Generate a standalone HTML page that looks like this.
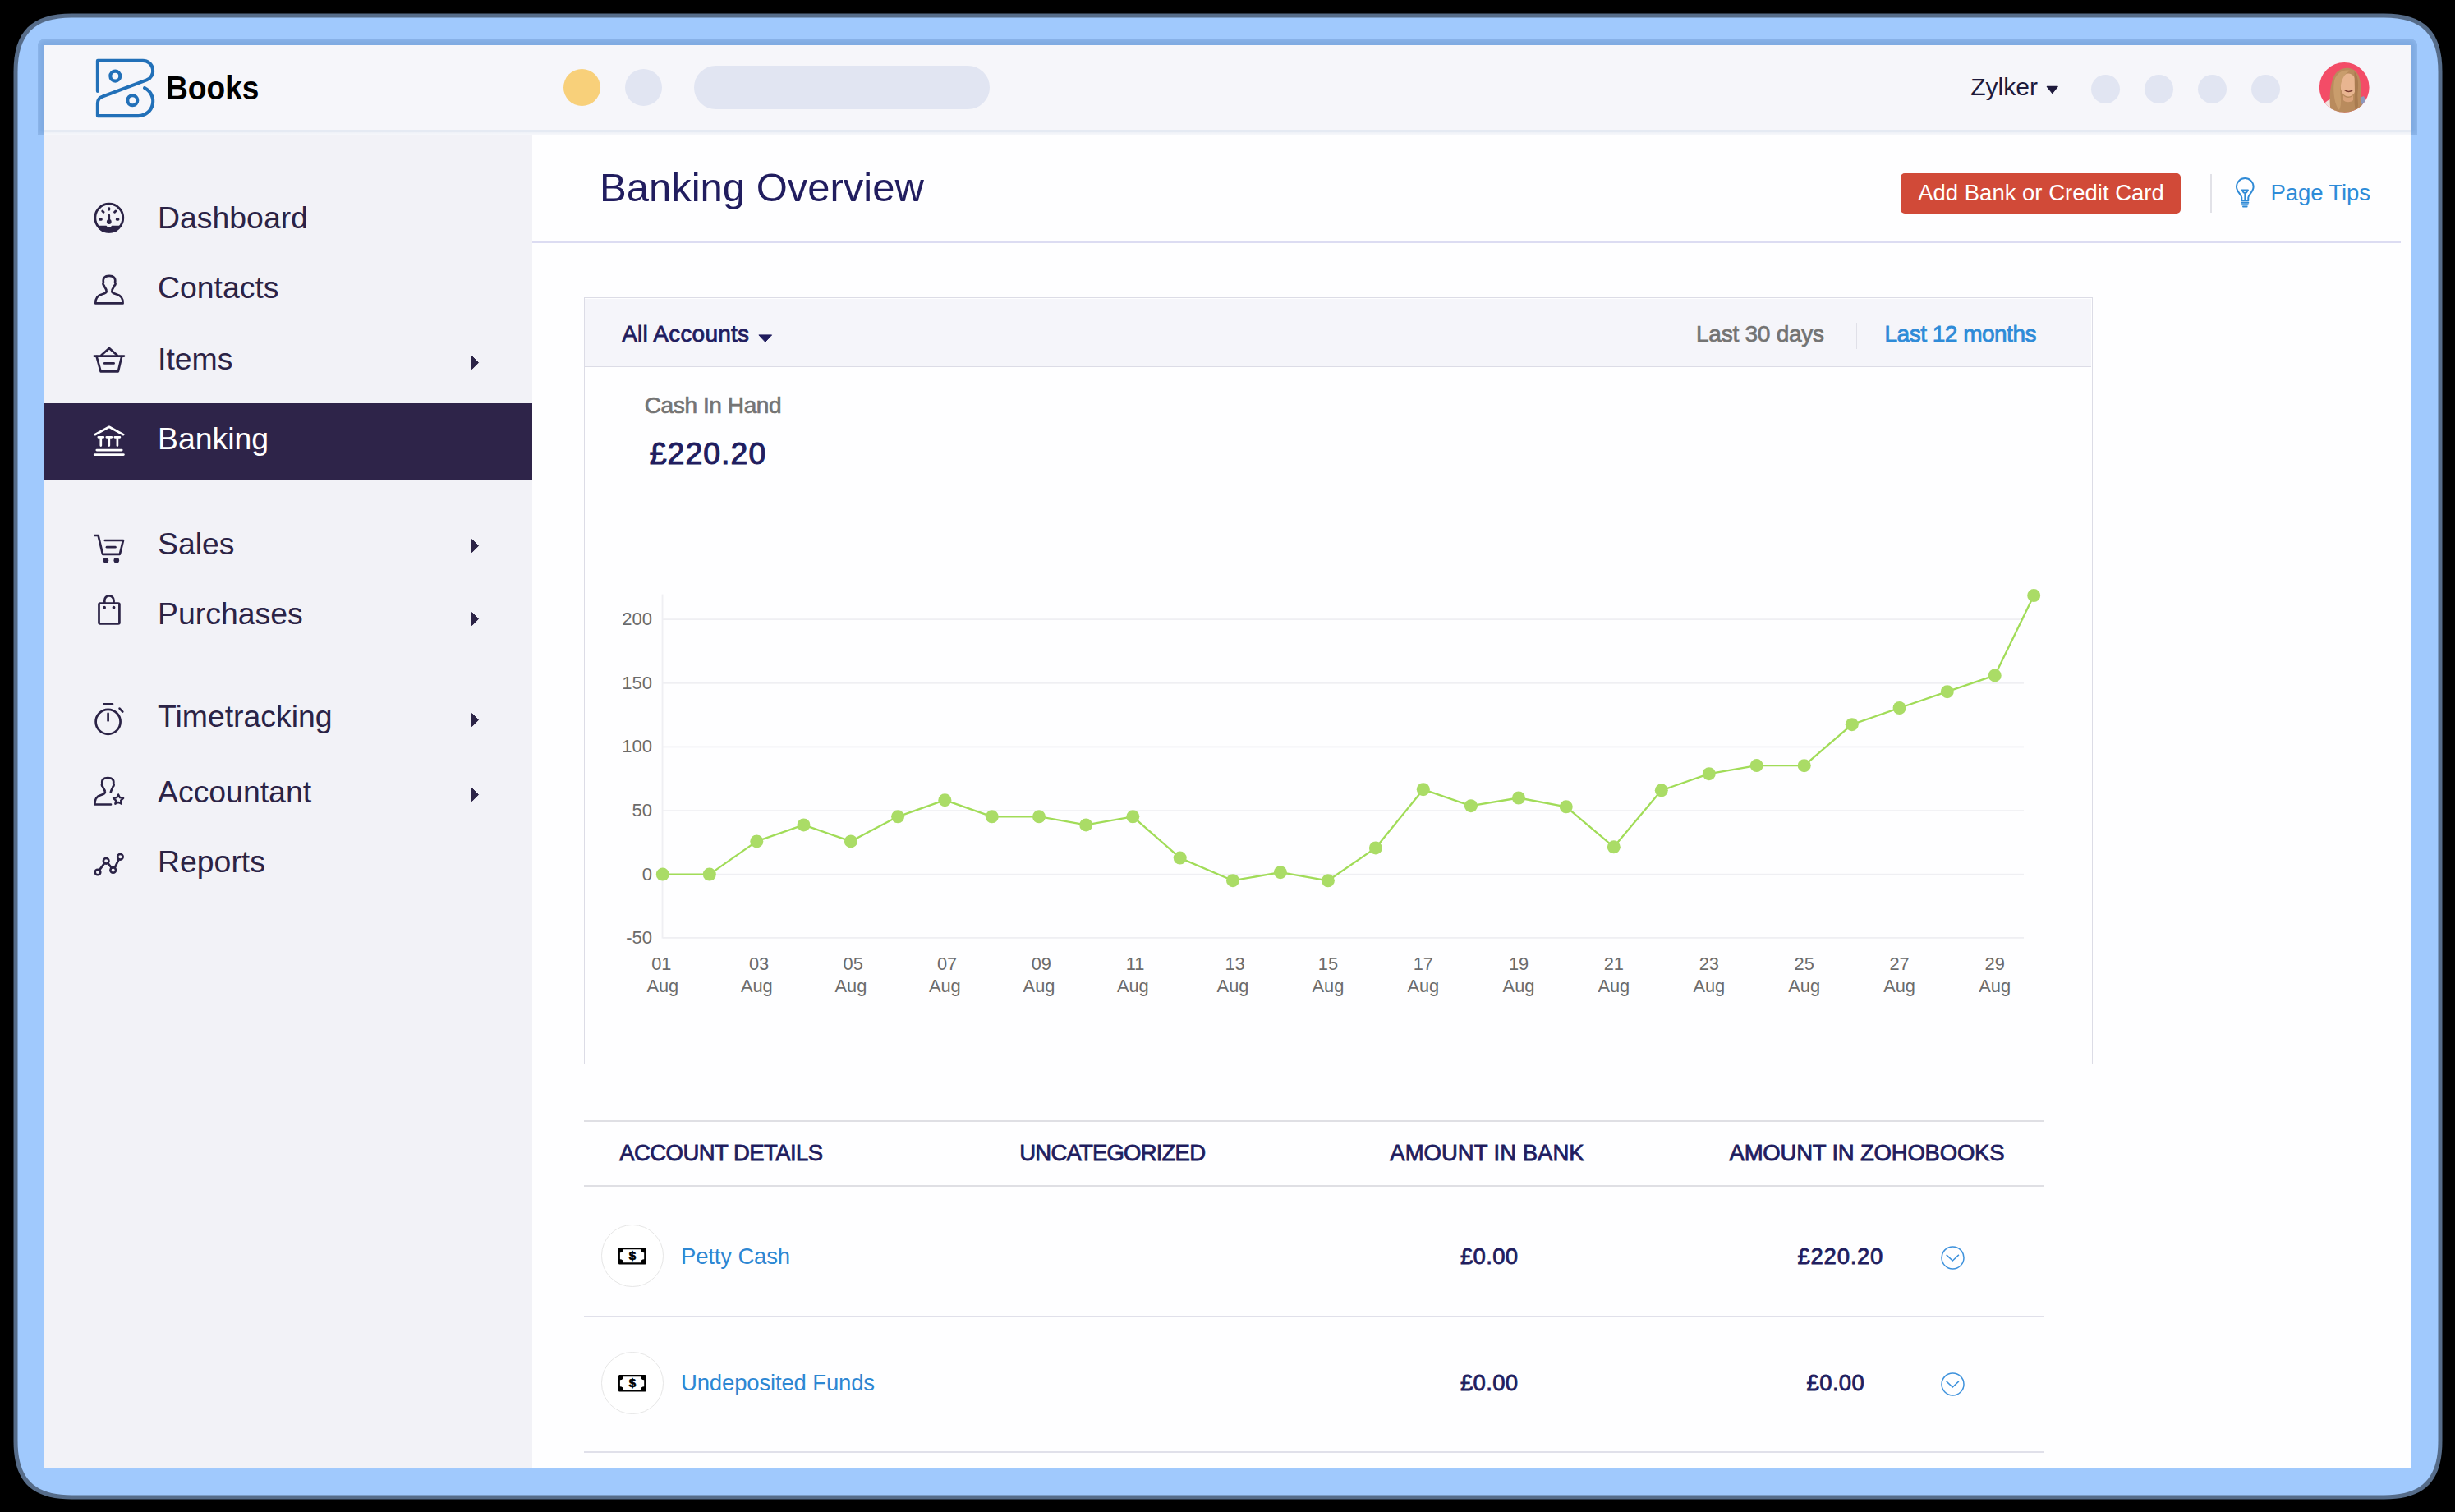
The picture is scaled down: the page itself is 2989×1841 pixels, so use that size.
<!DOCTYPE html><html><head><meta charset="utf-8"><style>
html,body{margin:0;padding:0;width:2989px;height:1841px;overflow:hidden;background:#000;}
*{box-sizing:border-box;}
body{font-family:"Liberation Sans",sans-serif;position:relative;}
.a{position:absolute;}
.t{position:absolute;white-space:nowrap;line-height:1;}
#frameo{position:absolute;left:16.5px;top:17px;width:2957px;height:1808.5px;border-radius:72px;background:#566c89;}
#frame{position:absolute;left:21.5px;top:22px;width:2946.5px;height:1798.5px;border-radius:67px;background:#a0c9fd;}
#hdrshadow{position:absolute;left:46px;top:47px;width:2897px;height:117px;border-radius:9px 9px 0 0;
  background:#80abe2;box-shadow:inset 0 0 4px 2px #8db6ea;}
#content{position:absolute;left:54px;top:55px;width:2881px;height:1732px;background:#fefeff;overflow:hidden;}
#header{position:absolute;left:0;top:0;width:2881px;height:103px;background:#f6f6fa;}
#hline{position:absolute;left:0;top:103px;width:2881px;height:3px;background:#e4e9f2;}
#hline2{position:absolute;left:0;top:106px;width:2881px;height:4px;background:linear-gradient(#eef1f6,rgba(255,255,255,0));}
#sidebar{position:absolute;left:0;top:106px;width:594px;height:1626px;background:#f2f2f7;}
</style></head><body><svg class="a" style="left:0;top:0" width="2989" height="1841"><path d="M87.5,16.5 H2902.5 C2951.8,16.5 2973.5,38.2 2973.5,87.5 V1754.5 C2973.5,1803.8 2951.8,1825.5 2902.5,1825.5 H87.5 C38.2,1825.5 16.5,1803.8 16.5,1754.5 V87.5 C16.5,38.2 38.2,16.5 87.5,16.5 Z" fill="#566c89"/><path d="M87.5,21.5 H2902.5 C2948.3,21.5 2968.5,41.7 2968.5,87.5 V1754.5 C2968.5,1800.3 2948.3,1820.5 2902.5,1820.5 H87.5 C41.7,1820.5 21.5,1800.3 21.5,1754.5 V87.5 C21.5,41.7 41.7,21.5 87.5,21.5 Z" fill="#a0c9fd"/></svg>
<div id="hdrshadow"></div><div id="content"></div>
<div class="a" style="left:54px;top:55px;width:2881px;height:103px;background:#f6f6fa"></div>
<div class="a" style="left:54px;top:164px;width:594px;height:1623px;background:#f2f2f7"></div>
<div class="a" style="left:54px;top:158px;width:2881px;height:3px;background:#e5eaf3"></div>
<div class="a" style="left:54px;top:161px;width:2881px;height:3px;background:linear-gradient(#eef1f7,#f6f7fb)"></div>
<div class="a" style="left:685.5px;top:84px;width:45px;height:45px;border-radius:50%;background:#f8d07a"></div>
<div class="a" style="left:760.5px;top:84px;width:45px;height:45px;border-radius:50%;background:#e1e5f2"></div>
<div class="a" style="left:845px;top:79.5px;width:360px;height:53px;border-radius:26.5px;background:#e1e5f2"></div>
<div class="a" style="left:2546.3px;top:90.5px;width:35px;height:35px;border-radius:50%;background:#e1e5f2"></div>
<div class="a" style="left:2611.1px;top:90.5px;width:35px;height:35px;border-radius:50%;background:#e1e5f2"></div>
<div class="a" style="left:2676.2px;top:90.5px;width:35px;height:35px;border-radius:50%;background:#e1e5f2"></div>
<div class="a" style="left:2741.3px;top:90.5px;width:35px;height:35px;border-radius:50%;background:#e1e5f2"></div>
<div class="t" style="left:2399.3px;top:90.9px;font-size:30px;color:#1e1a3c;">Zylker</div>
<svg class="a" style="left:2490px;top:103px" width="18" height="12"><path d="M2.3,2.4 H15.2 L8.75,10.5 Z" fill="#1e1a3c" stroke="#1e1a3c" stroke-width="1.2" stroke-linejoin="round"/></svg>
<svg class="a" style="left:2823px;top:76px" width="62" height="62" viewBox="0 0 62 62">
<defs><clipPath id="avc"><circle cx="31.2" cy="30.4" r="30.4"/></clipPath></defs>
<g clip-path="url(#avc)">
<rect width="62" height="62" fill="#f34c67"/>
<path d="M5,52 C10,45 18,42 25,44 L31,62 L8,62 Z" fill="#f3e2de"/>
<path d="M47,44 L55,41 L59,50 L50,55 Z" fill="#8d98bd"/>
<path d="M15,60 C12,46 14,28 18,18 C22,9 30,6 37,7 C46,8 50,16 51,26 C52,36 50,44 53,52 C54,58 49,62 43,62 L20,62 Z" fill="#b98b5d"/>
<ellipse cx="36.2" cy="27.5" rx="9.8" ry="14" fill="#e8b590"/>
<path d="M19,22 C22,12 31,8 38,10 C31,14 27,22 26.5,32 C26,42 29,50 25,58 C19,52 17,34 19,22 Z" fill="#c99d6c"/>
<path d="M43.5,11 C49,17 48.5,29 47.5,37 C46.5,45 50,52 46,60 C42.5,53 44,45 44,37 Z" fill="#a87b50"/>
<path d="M31.5,33.5 Q36.5,37.5 41.5,33.5" stroke="#7a3d33" stroke-width="1.4" fill="none"/>
<path d="M30,40 C33,44 39,44 42,40 L42,46 C39,49 33,49 30,46 Z" fill="#d9a27a"/>
</g></svg>
<svg class="a" style="left:100px;top:60px" width="240" height="100" viewBox="100 60 240 100">
<g fill="none" stroke="#2270b8" stroke-width="4.1" stroke-linecap="round" stroke-linejoin="round">
<path d="M118.9,110.9 V73.9 H174 A12.2,12.2 0 0 1 178.6,97.4 L124.6,117.6 A8.5,8.5 0 0 0 118.9,125.6 V141.1 H168.4 A17.8,17.8 0 0 0 176,107.2"/>
<circle cx="140.3" cy="92.6" r="6.0" stroke-width="4.1"/>
<circle cx="161.3" cy="122.3" r="6.0" stroke-width="4.1"/>
</g></svg>
<div class="t" style="left:201.5px;top:87.2px;font-size:41px;color:#000;font-weight:700;transform:scaleX(0.905);transform-origin:0 0;">Books</div>
<div class="t" style="left:192.0px;top:246.8px;font-size:37.4px;color:#2b2346;">Dashboard</div>
<div class="t" style="left:192.0px;top:332.0px;font-size:37.4px;color:#2b2346;">Contacts</div>
<div class="t" style="left:192.0px;top:419.0px;font-size:37.4px;color:#2b2346;">Items</div>
<div class="t" style="left:192.0px;top:643.8px;font-size:37.4px;color:#2b2346;">Sales</div>
<div class="t" style="left:192.0px;top:728.8px;font-size:37.4px;color:#2b2346;">Purchases</div>
<div class="t" style="left:192.0px;top:854.2px;font-size:37.4px;color:#2b2346;">Timetracking</div>
<div class="t" style="left:192.0px;top:946.2px;font-size:37.4px;color:#2b2346;">Accountant</div>
<div class="t" style="left:192.0px;top:1031.1px;font-size:37.4px;color:#2b2346;">Reports</div>
<div class="a" style="left:54px;top:491px;width:594px;height:93px;background:#2e2449"></div>
<div class="t" style="left:192.0px;top:516.2px;font-size:37.4px;color:#ffffff;">Banking</div>
<svg class="a" style="left:570px;top:431.3px" width="16" height="20"><path d="M4.5,2.6 L12.5,10.6 L4.5,18.6 Z" fill="#2b2346" stroke="#2b2346" stroke-width="1" stroke-linejoin="round"/></svg>
<svg class="a" style="left:570px;top:654.4px" width="16" height="20"><path d="M4.5,2.6 L12.5,10.6 L4.5,18.6 Z" fill="#2b2346" stroke="#2b2346" stroke-width="1" stroke-linejoin="round"/></svg>
<svg class="a" style="left:570px;top:742.7px" width="16" height="20"><path d="M4.5,2.6 L12.5,10.6 L4.5,18.6 Z" fill="#2b2346" stroke="#2b2346" stroke-width="1" stroke-linejoin="round"/></svg>
<svg class="a" style="left:570px;top:865.6px" width="16" height="20"><path d="M4.5,2.6 L12.5,10.6 L4.5,18.6 Z" fill="#2b2346" stroke="#2b2346" stroke-width="1" stroke-linejoin="round"/></svg>
<svg class="a" style="left:570px;top:957.0px" width="16" height="20"><path d="M4.5,2.6 L12.5,10.6 L4.5,18.6 Z" fill="#2b2346" stroke="#2b2346" stroke-width="1" stroke-linejoin="round"/></svg>
<svg class="a" style="left:100px;top:230px" width="70" height="860" viewBox="100 230 70 860">
<g fill="none" stroke="#2b2346" stroke-width="2.8" stroke-linecap="round" stroke-linejoin="round">
<!-- dashboard -->
<circle cx="132.8" cy="265.2" r="17"/>
<path d="M132.8,253.6 v1.6 M124.8,257 l1.2,1.2 M140.8,257 l-1.2,1.2 M121.6,267.2 h1.8 M142.2,267.2 h1.8" stroke-width="2.9"/>
<path d="M132.8,262 v7" stroke-width="2.6"/>
</g>
<circle cx="132.8" cy="270" r="2.9" fill="#2b2346"/>
<path d="M117.5,274.7 H129.5 A3.6,3.6 0 0 0 136.1,274.7 H148.1 A17.4,17.4 0 0 1 117.5,274.7 Z" fill="#2b2346"/>
<g fill="none" stroke="#2b2346" stroke-width="2.7" stroke-linecap="round" stroke-linejoin="round">
<!-- contacts -->
<path d="M116.3,369.4 H149.6 C149.8,362.5 147,359.5 141.5,358.3 C137.5,357.4 136,355.8 136.4,353.8 C136.8,351.5 139,349.5 139.4,347.6 C140.8,347 140.8,345 140.1,344 C141,338.5 138.5,335.8 133,335.8 C127.5,335.8 125,338.5 125.9,344 C125.2,345 125.2,347 126.6,347.6 C127,349.5 129.2,351.5 129.6,353.8 C130,355.8 128.5,357.4 124.5,358.3 C119,359.5 116.2,362.5 116.3,369.4 Z"/>
<!-- items basket -->
<path d="M123.4,432.5 L133,424 L142.6,432.5"/>
<path d="M114.8,433.6 H151"/>
<path d="M117.6,434 L122.6,452.3 H143.9 L148.2,434"/>
<path d="M127.2,442.4 H138.6"/>
<!-- sales cart -->
<path d="M115.3,652 H119.6 L125,674.8 H145.9 L150,658 H127.8"/>
<path d="M130,666.2 H140.4"/>
<!-- purchases bag -->
<rect x="120.5" y="734.6" width="24.9" height="24.9" rx="1.4"/>
<path d="M127.3,734.2 V731 A5.6,5.6 0 0 1 138.5,731 V734.2"/>
<!-- stopwatch -->
<circle cx="131.6" cy="878.8" r="15"/>
<path d="M126.3,857.3 H137 M145.6,862.6 L149.3,866.6"/>
<path d="M131.6,868.8 V877.4"/>
<!-- accountant -->
<path d="M135,979.5 H115.4 C115.3,972.5 117.8,969.2 123,968 C126.8,967.1 128.2,965.5 127.8,963.5 C127.4,961.2 125.3,959.4 125,957.6 C123.7,957 123.7,955 124.4,954 C123.6,949.2 126,947 131.3,947 C136.6,947 139,949.2 138.2,954 C138.9,955 138.9,957 137.6,957.6 C137.3,959.4 135.5,961.5 134.8,964.5"/>
<path d="M144.1,967.4 L146,971.2 L150.2,971.8 L147.1,974.7 L147.9,978.8 L144.1,976.8 L140.3,978.8 L141.1,974.7 L138,971.8 L142.2,971.2 Z" stroke-width="2.3"/>
<!-- reports -->
<path d="M121,1059.4 L127.2,1051 M131.4,1051 L135.8,1056.6 M139.6,1056.8 L144.6,1046.4"/>
<circle cx="119" cy="1062" r="3.3" stroke-width="2.6"/>
<circle cx="129.2" cy="1048.3" r="3.3" stroke-width="2.6"/>
<circle cx="137.7" cy="1059.4" r="3.3" stroke-width="2.6"/>
<circle cx="146.4" cy="1043.3" r="3.3" stroke-width="2.6"/>
</g>
<circle cx="128.9" cy="682.3" r="3.3" fill="#2b2346"/>
<circle cx="141.8" cy="682.3" r="3.3" fill="#2b2346"/>
<circle cx="127.1" cy="739.7" r="1.9" fill="#2b2346"/>
<circle cx="138.5" cy="739.7" r="1.9" fill="#2b2346"/>
<!-- bank (white) -->
<g fill="none" stroke="#fff" stroke-width="2.7" stroke-linecap="round" stroke-linejoin="round">
<path d="M115.6,529.2 L132.9,519.8 L150.2,529.2"/>
<path d="M122.8,533 V542.6 M132.8,533 V542.6 M142.9,533 V542.6"/>
<path d="M119.8,532.3 H125.8 M129.8,532.3 H135.8 M139.9,532.3 H145.9"/>
<path d="M117.8,548.1 H148.2"/>
<path d="M115.3,553.6 H150.4"/>
</g>
</svg>
<div class="t" style="left:730.0px;top:203.5px;font-size:49px;color:#211d5f;">Banking Overview</div>
<div class="a" style="left:648px;top:294px;width:2275px;height:2.2px;background:#dcdcf2"></div>
<div class="a" style="left:2314.4px;top:210.5px;width:341px;height:49.5px;border-radius:5px;background:#d14a38"></div>
<div class="t" style="left:2335.2px;top:221.2px;font-size:27.5px;color:#fff;">Add Bank or Credit Card</div>
<div class="a" style="left:2691.3px;top:212.3px;width:1.4px;height:46.5px;background:#e2e2e8"></div>
<svg class="a" style="left:2715px;top:213px" width="36" height="44" viewBox="2715 213 36 44">
<g fill="none" stroke="#2f8ad6" stroke-width="2" stroke-linecap="round" stroke-linejoin="round">
<path d="M2729.3,244.3 V240.4 C2729.3,237.6 2723,233.2 2723,227.4 A10.3,10.3 0 0 1 2743.6,227.4 C2743.6,233.2 2737.3,237.6 2737.3,240.4 V244.3 Z"/>
<path d="M2729.6,231.4 H2737 L2735,234.6 H2731.6 Z M2733.3,234.6 V243.5" stroke-width="1.9"/>
<path d="M2729.3,246.8 H2737.3 M2729.8,249.3 H2736.8"/>
<path d="M2731,251.6 H2735.6"/>
</g></svg>
<div class="t" style="left:2764.5px;top:221.2px;font-size:27.5px;color:#2e8bd8;letter-spacing:-0.1px;">Page Tips</div>
<div class="a" style="left:710.5px;top:362px;width:1837px;height:934px;border:1.6px solid #dcdce6;background:#fefeff"></div>
<div class="a" style="left:712px;top:363.5px;width:1834px;height:82.5px;background:#f5f5fa"></div>
<div class="a" style="left:712px;top:445.6px;width:1834px;height:1.6px;background:#dcdce6"></div>
<div class="a" style="left:712px;top:617.6px;width:1834px;height:1.6px;background:#dcdce6"></div>
<div class="t" style="left:757.2px;top:392.7px;font-size:28px;color:#211d5f;letter-spacing:0.2px;-webkit-text-stroke:0.8px #211d5f;">All Accounts</div>
<svg class="a" style="left:920px;top:404px" width="24" height="16"><path d="M3.9,3.9 H19.6 L11.75,12.3 Z" fill="#211d5f" stroke="#211d5f" stroke-width="1" stroke-linejoin="round"/></svg>
<div class="t" style="left:2065.0px;top:392.7px;font-size:28px;color:#737373;letter-spacing:-0.25px;-webkit-text-stroke:0.7px #737373;">Last 30 days</div>
<div class="a" style="left:2259.6px;top:392.6px;width:1.4px;height:32.4px;background:#e0e0e8"></div>
<div class="t" style="left:2294.5px;top:392.7px;font-size:28px;color:#2e8bd8;letter-spacing:-0.5px;-webkit-text-stroke:0.8px #2e8bd8;">Last 12 months</div>
<div class="t" style="left:784.8px;top:479.7px;font-size:28px;color:#747474;letter-spacing:-0.4px;-webkit-text-stroke:0.7px #747474;">Cash In Hand</div>
<div class="t" style="left:790.7px;top:534.1px;font-size:37.5px;color:#211d5f;letter-spacing:1.0px;-webkit-text-stroke:1.1px #211d5f;">£220.20</div>
<svg class="a" style="left:711px;top:620px" width="1835" height="674" viewBox="711 620 1835 674"><rect x="807" y="753.2" width="1657" height="1.8" fill="#efeff3"/><rect x="807" y="830.9" width="1657" height="1.8" fill="#efeff3"/><rect x="807" y="908.5" width="1657" height="1.8" fill="#efeff3"/><rect x="807" y="986.2" width="1657" height="1.8" fill="#efeff3"/><rect x="807" y="1063.8" width="1657" height="1.8" fill="#efeff3"/><rect x="807" y="1141.0" width="1657" height="1.8" fill="#efeff3"/><rect x="805.6" y="723.6" width="1.9" height="419" fill="#efeff3"/><path d="M806.8,1064.6 L863.8,1064.6 L921.3,1024.4 L978.5,1004.4 L1035.9,1024.4 L1093.1,994.3 L1150.35,974.2 L1207.8,994.3 L1265,994.3 L1322.2,1004.4 L1379.3,994.3 L1436.7,1044.6 L1501,1072.2 L1558.9,1062.2 L1616.9,1072.3 L1674.9,1032.4 L1732.8,961.2 L1790.9,981.2 L1849,971.5 L1906.8,982.3 L1964.8,1031.3 L2022.8,962.3 L2080.8,942.2 L2138.7,932.1 L2196.7,932.2 L2254.8,882.2 L2312.6,862 L2370.8,842.2 L2428.7,822.4 L2476.2,725.1" fill="none" stroke="#a1dc58" stroke-width="2.3" stroke-linejoin="round"/><circle cx="806.8" cy="1064.6" r="8" fill="#aadc66"/><circle cx="863.8" cy="1064.6" r="8" fill="#aadc66"/><circle cx="921.3" cy="1024.4" r="8" fill="#aadc66"/><circle cx="978.5" cy="1004.4" r="8" fill="#aadc66"/><circle cx="1035.9" cy="1024.4" r="8" fill="#aadc66"/><circle cx="1093.1" cy="994.3" r="8" fill="#aadc66"/><circle cx="1150.35" cy="974.2" r="8" fill="#aadc66"/><circle cx="1207.8" cy="994.3" r="8" fill="#aadc66"/><circle cx="1265" cy="994.3" r="8" fill="#aadc66"/><circle cx="1322.2" cy="1004.4" r="8" fill="#aadc66"/><circle cx="1379.3" cy="994.3" r="8" fill="#aadc66"/><circle cx="1436.7" cy="1044.6" r="8" fill="#aadc66"/><circle cx="1501" cy="1072.2" r="8" fill="#aadc66"/><circle cx="1558.9" cy="1062.2" r="8" fill="#aadc66"/><circle cx="1616.9" cy="1072.3" r="8" fill="#aadc66"/><circle cx="1674.9" cy="1032.4" r="8" fill="#aadc66"/><circle cx="1732.8" cy="961.2" r="8" fill="#aadc66"/><circle cx="1790.9" cy="981.2" r="8" fill="#aadc66"/><circle cx="1849" cy="971.5" r="8" fill="#aadc66"/><circle cx="1906.8" cy="982.3" r="8" fill="#aadc66"/><circle cx="1964.8" cy="1031.3" r="8" fill="#aadc66"/><circle cx="2022.8" cy="962.3" r="8" fill="#aadc66"/><circle cx="2080.8" cy="942.2" r="8" fill="#aadc66"/><circle cx="2138.7" cy="932.1" r="8" fill="#aadc66"/><circle cx="2196.7" cy="932.2" r="8" fill="#aadc66"/><circle cx="2254.8" cy="882.2" r="8" fill="#aadc66"/><circle cx="2312.6" cy="862" r="8" fill="#aadc66"/><circle cx="2370.8" cy="842.2" r="8" fill="#aadc66"/><circle cx="2428.7" cy="822.4" r="8" fill="#aadc66"/><circle cx="2476.2" cy="725.1" r="8" fill="#aadc66"/></svg>
<div class="t" style="left:-206.0px;width:1000px;text-align:right;top:742.9px;font-size:22px;color:#6b6b6b;">200</div>
<div class="t" style="left:-206.0px;width:1000px;text-align:right;top:820.6px;font-size:22px;color:#6b6b6b;">150</div>
<div class="t" style="left:-206.0px;width:1000px;text-align:right;top:898.2px;font-size:22px;color:#6b6b6b;">100</div>
<div class="t" style="left:-206.0px;width:1000px;text-align:right;top:975.9px;font-size:22px;color:#6b6b6b;">50</div>
<div class="t" style="left:-206.0px;width:1000px;text-align:right;top:1053.5px;font-size:22px;color:#6b6b6b;">0</div>
<div class="t" style="left:-206.0px;width:1000px;text-align:right;top:1130.7px;font-size:22px;color:#6b6b6b;">-50</div>
<div class="t" style="left:305.3px;width:1000px;text-align:center;top:1163.0px;font-size:21.8px;color:#6b6b6b;">01</div>
<div class="t" style="left:306.8px;width:1000px;text-align:center;top:1189.5px;font-size:21.8px;color:#6b6b6b;">Aug</div>
<div class="t" style="left:424.1px;width:1000px;text-align:center;top:1163.0px;font-size:21.8px;color:#6b6b6b;">03</div>
<div class="t" style="left:421.3px;width:1000px;text-align:center;top:1189.5px;font-size:21.8px;color:#6b6b6b;">Aug</div>
<div class="t" style="left:538.7px;width:1000px;text-align:center;top:1163.0px;font-size:21.8px;color:#6b6b6b;">05</div>
<div class="t" style="left:535.9px;width:1000px;text-align:center;top:1189.5px;font-size:21.8px;color:#6b6b6b;">Aug</div>
<div class="t" style="left:653.1px;width:1000px;text-align:center;top:1163.0px;font-size:21.8px;color:#6b6b6b;">07</div>
<div class="t" style="left:650.3px;width:1000px;text-align:center;top:1189.5px;font-size:21.8px;color:#6b6b6b;">Aug</div>
<div class="t" style="left:767.8px;width:1000px;text-align:center;top:1163.0px;font-size:21.8px;color:#6b6b6b;">09</div>
<div class="t" style="left:765.0px;width:1000px;text-align:center;top:1189.5px;font-size:21.8px;color:#6b6b6b;">Aug</div>
<div class="t" style="left:882.1px;width:1000px;text-align:center;top:1163.0px;font-size:21.8px;color:#6b6b6b;">11</div>
<div class="t" style="left:879.3px;width:1000px;text-align:center;top:1189.5px;font-size:21.8px;color:#6b6b6b;">Aug</div>
<div class="t" style="left:1003.6px;width:1000px;text-align:center;top:1163.0px;font-size:21.8px;color:#6b6b6b;">13</div>
<div class="t" style="left:1001.0px;width:1000px;text-align:center;top:1189.5px;font-size:21.8px;color:#6b6b6b;">Aug</div>
<div class="t" style="left:1116.9px;width:1000px;text-align:center;top:1163.0px;font-size:21.8px;color:#6b6b6b;">15</div>
<div class="t" style="left:1116.9px;width:1000px;text-align:center;top:1189.5px;font-size:21.8px;color:#6b6b6b;">Aug</div>
<div class="t" style="left:1232.8px;width:1000px;text-align:center;top:1163.0px;font-size:21.8px;color:#6b6b6b;">17</div>
<div class="t" style="left:1232.8px;width:1000px;text-align:center;top:1189.5px;font-size:21.8px;color:#6b6b6b;">Aug</div>
<div class="t" style="left:1349.0px;width:1000px;text-align:center;top:1163.0px;font-size:21.8px;color:#6b6b6b;">19</div>
<div class="t" style="left:1349.0px;width:1000px;text-align:center;top:1189.5px;font-size:21.8px;color:#6b6b6b;">Aug</div>
<div class="t" style="left:1464.8px;width:1000px;text-align:center;top:1163.0px;font-size:21.8px;color:#6b6b6b;">21</div>
<div class="t" style="left:1464.8px;width:1000px;text-align:center;top:1189.5px;font-size:21.8px;color:#6b6b6b;">Aug</div>
<div class="t" style="left:1580.8px;width:1000px;text-align:center;top:1163.0px;font-size:21.8px;color:#6b6b6b;">23</div>
<div class="t" style="left:1580.8px;width:1000px;text-align:center;top:1189.5px;font-size:21.8px;color:#6b6b6b;">Aug</div>
<div class="t" style="left:1696.7px;width:1000px;text-align:center;top:1163.0px;font-size:21.8px;color:#6b6b6b;">25</div>
<div class="t" style="left:1696.7px;width:1000px;text-align:center;top:1189.5px;font-size:21.8px;color:#6b6b6b;">Aug</div>
<div class="t" style="left:1812.6px;width:1000px;text-align:center;top:1163.0px;font-size:21.8px;color:#6b6b6b;">27</div>
<div class="t" style="left:1812.6px;width:1000px;text-align:center;top:1189.5px;font-size:21.8px;color:#6b6b6b;">Aug</div>
<div class="t" style="left:1928.7px;width:1000px;text-align:center;top:1163.0px;font-size:21.8px;color:#6b6b6b;">29</div>
<div class="t" style="left:1928.7px;width:1000px;text-align:center;top:1189.5px;font-size:21.8px;color:#6b6b6b;">Aug</div>
<div class="a" style="left:711px;top:1364px;width:1777px;height:1.8px;background:#dfdfe4"></div>
<div class="a" style="left:711px;top:1443.2px;width:1777px;height:1.8px;background:#dfdfe4"></div>
<div class="t" style="left:754.2px;top:1389.7px;font-size:27.5px;color:#211d5f;letter-spacing:-0.55px;-webkit-text-stroke:0.8px #211d5f;">ACCOUNT DETAILS</div>
<div class="t" style="left:1241.3px;top:1389.7px;font-size:27.5px;color:#211d5f;letter-spacing:-0.8px;-webkit-text-stroke:0.8px #211d5f;">UNCATEGORIZED</div>
<div class="t" style="left:1692.3px;top:1389.7px;font-size:27.5px;color:#211d5f;-webkit-text-stroke:0.8px #211d5f;">AMOUNT IN BANK</div>
<div class="t" style="left:2105.5px;top:1389.7px;font-size:27.5px;color:#211d5f;letter-spacing:-0.2px;-webkit-text-stroke:0.8px #211d5f;">AMOUNT IN ZOHOBOOKS</div>
<div class="a" style="left:711px;top:1602.3px;width:1777px;height:1.8px;background:#e0e0ea"></div>
<div class="a" style="left:711px;top:1766.8px;width:1777px;height:1.8px;background:#e0e0ea"></div>
<div class="a" style="left:732.0px;top:1491.2px;width:75.5px;height:75.5px;border-radius:50%;border:1.6px solid #e6e6e6;background:#fff"></div>
<svg class="a" style="left:752px;top:1518.0px" width="36" height="22" viewBox="0 0 36 22">
<path d="M2.4,1 H33.3 A1.5,1.5 0 0 1 34.8,2.5 V20 A1.5,1.5 0 0 1 33.3,21.5 H2.4 A1.5,1.5 0 0 1 0.9,20 V2.5 A1.5,1.5 0 0 1 2.4,1 Z M6.9,3.2 H28.2 A4,4 0 0 0 32.2,7.2 V15.2 A4,4 0 0 0 28.2,19.2 H6.9 A4,4 0 0 0 2.9,15.2 V7.2 A4,4 0 0 0 6.9,3.2 Z" fill="#000" fill-rule="evenodd"/>
<text x="17.8" y="16.4" font-family="Liberation Sans" font-weight="700" font-size="15" text-anchor="middle" fill="#000" stroke="#000" stroke-width="0.7">$</text>
</svg>
<div class="t" style="left:829.0px;top:1516.4px;font-size:27.5px;color:#2d87d3;letter-spacing:-0.15px;">Petty Cash</div>
<div class="t" style="left:1777.9px;top:1516.4px;font-size:27.5px;color:#211d5f;letter-spacing:0.35px;-webkit-text-stroke:0.8px #211d5f;">£0.00</div>
<div class="t" style="left:2188.5px;top:1516.4px;font-size:27.5px;color:#211d5f;letter-spacing:0.75px;-webkit-text-stroke:0.8px #211d5f;">£220.20</div>
<svg class="a" style="left:2361px;top:1515.1px" width="33" height="33" viewBox="0 0 33 33">
<circle cx="16.5" cy="16.4" r="13.5" fill="none" stroke="#3d91dc" stroke-width="1.5"/>
<path d="M8.7,12.9 L16.3,20 L23.9,12.9" fill="none" stroke="#3d91dc" stroke-width="1.5"/>
</svg>
<div class="a" style="left:732.0px;top:1646.2px;width:75.5px;height:75.5px;border-radius:50%;border:1.6px solid #e6e6e6;background:#fff"></div>
<svg class="a" style="left:752px;top:1673.0px" width="36" height="22" viewBox="0 0 36 22">
<path d="M2.4,1 H33.3 A1.5,1.5 0 0 1 34.8,2.5 V20 A1.5,1.5 0 0 1 33.3,21.5 H2.4 A1.5,1.5 0 0 1 0.9,20 V2.5 A1.5,1.5 0 0 1 2.4,1 Z M6.9,3.2 H28.2 A4,4 0 0 0 32.2,7.2 V15.2 A4,4 0 0 0 28.2,19.2 H6.9 A4,4 0 0 0 2.9,15.2 V7.2 A4,4 0 0 0 6.9,3.2 Z" fill="#000" fill-rule="evenodd"/>
<text x="17.8" y="16.4" font-family="Liberation Sans" font-weight="700" font-size="15" text-anchor="middle" fill="#000" stroke="#000" stroke-width="0.7">$</text>
</svg>
<div class="t" style="left:829.0px;top:1669.9px;font-size:27.5px;color:#2d87d3;letter-spacing:-0.15px;">Undeposited Funds</div>
<div class="t" style="left:1777.9px;top:1669.9px;font-size:27.5px;color:#211d5f;letter-spacing:0.35px;-webkit-text-stroke:0.8px #211d5f;">£0.00</div>
<div class="t" style="left:2199.6px;top:1669.9px;font-size:27.5px;color:#211d5f;letter-spacing:0.35px;-webkit-text-stroke:0.8px #211d5f;">£0.00</div>
<svg class="a" style="left:2361px;top:1669.1px" width="33" height="33" viewBox="0 0 33 33">
<circle cx="16.5" cy="16.4" r="13.5" fill="none" stroke="#3d91dc" stroke-width="1.5"/>
<path d="M8.7,12.9 L16.3,20 L23.9,12.9" fill="none" stroke="#3d91dc" stroke-width="1.5"/>
</svg></body></html>
